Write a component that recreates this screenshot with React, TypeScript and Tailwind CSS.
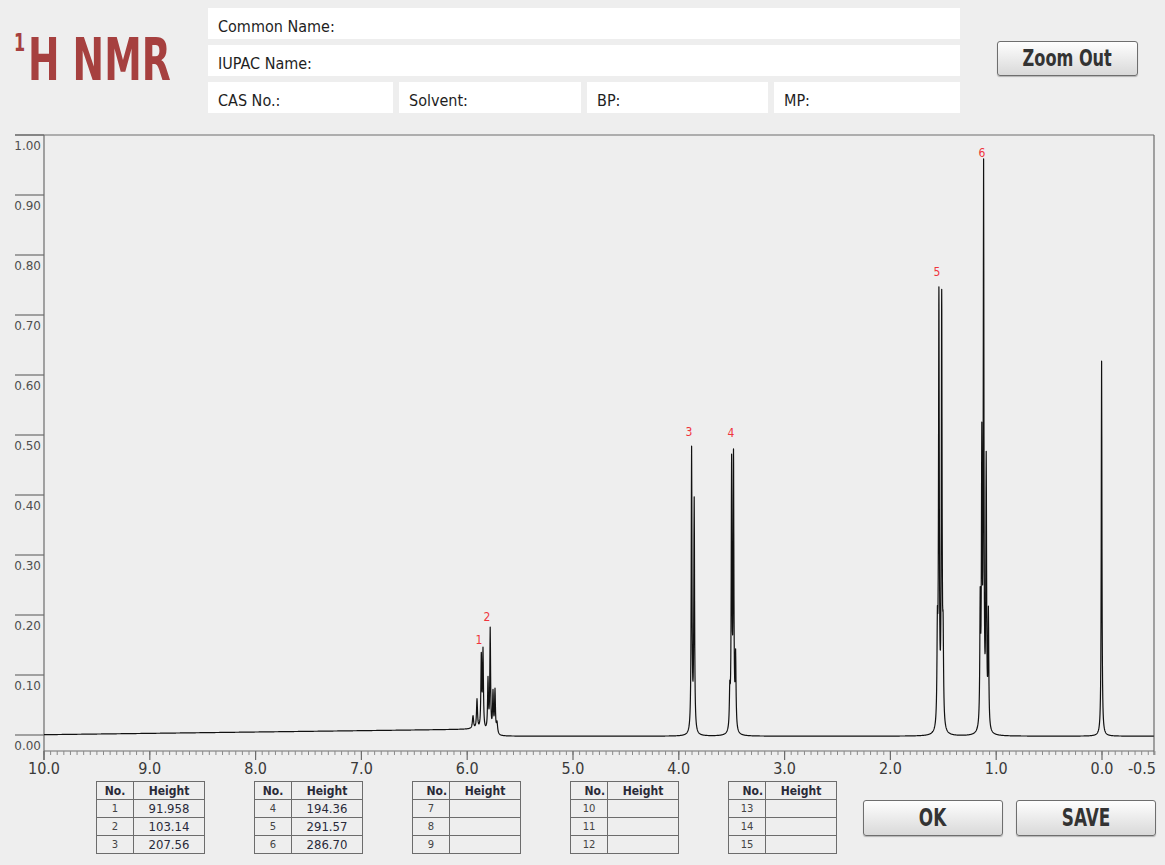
import React from 'react';

// plot geometry, in page pixels
const X0 = 44;
const X1 = 1154;
const PX_PER_PPM = 105.8;
const Y_TOP = 135;
const Y0 = 735; // 0.00 on the intensity axis
const UNIT = 600; // pixels for 1.00
const Y_AXIS = 751;

const xOf = (ppm: number) => X0 + (10 - ppm) * PX_PER_PPM;

// spectrum lines: [x, height, half width]
const LINES: [number, number, number][] = [
  [473, 0.022, 0.7],
  [477, 0.05, 0.6],
  [481.3, 0.12, 0.5],
  [483, 0.13, 0.5],
  [488, 0.085, 0.5],
  [490.2, 0.17, 0.45],
  [493, 0.065, 0.5],
  [495, 0.07, 0.5],
  [497, 0.018, 0.7],
  [691.6, 0.472, 0.45],
  [694.2, 0.385, 0.45],
  [729.8, 0.06, 0.5],
  [731.6, 0.44, 0.45],
  [733.5, 0.448, 0.45],
  [735.6, 0.12, 0.5],
  [937.4, 0.15, 0.5],
  [938.9, 0.714, 0.45],
  [941.7, 0.71, 0.45],
  [943.1, 0.13, 0.5],
  [980.2, 0.2, 0.45],
  [981.8, 0.46, 0.45],
  [983.6, 0.917, 0.4],
  [986.2, 0.44, 0.45],
  [988.4, 0.19, 0.45],
  [1101.6, 0.625, 0.4],
];

const PEAK_LABELS: [string, number, number][] = [
  ['1', 479, 644],
  ['2', 487, 621],
  ['3', 689, 436],
  ['4', 731, 437],
  ['5', 937, 276],
  ['6', 982, 157],
];

function baseline(x: number) {
  if (x < 470) return 0.0005 + (0.009 * (x - 44)) / 426;
  if (x < 500) return 0.0095 - (0.0115 * (x - 470)) / 30;
  return -0.002;
}

function spectrumPoints() {
  const xs: number[] = [];
  for (let x = X0; x <= X1; x += 0.2) xs.push(x);
  LINES.forEach((l) => xs.push(l[0]));
  xs.sort((a, b) => a - b);
  return xs
    .map((x) => {
      let v = baseline(x);
      for (const [c, h, g] of LINES) v += (h * g * g) / (g * g + (x - c) * (x - c));
      return `${x.toFixed(2)},${(Y0 - v * UNIT).toFixed(2)}`;
    })
    .join(' ');
}

const NARROW = "font-['DejaVu_Sans_Condensed','Liberation_Sans_Narrow','Liberation_Sans',sans-serif]";

function Spectrum() {
  const points = spectrumPoints();
  const yTicks = Array.from({ length: 11 }, (_, i) => i);
  const majors = [10, 9, 8, 7, 6, 5, 4, 3, 2, 1, 0];
  const minors = Array.from({ length: 169 }, (_, i) => xOf(10 - i / 16));

  return (
    <svg width={1165} height={658} viewBox="0 120 1165 658" className="block">
      {/* frame */}
      <g stroke="#6c6c6c" strokeWidth={1.2} fill="none">
        <line x1={15} y1={Y_TOP} x2={X1} y2={Y_TOP} />
        <line x1={X0} y1={Y_TOP} x2={X0} y2={760} />
        <line x1={X1} y1={Y_TOP} x2={X1} y2={755} />
        <line x1={X0} y1={Y_AXIS} x2={X1} y2={Y_AXIS} />
        {yTicks.map((i) => (
          <line key={i} x1={15} y1={Y_TOP + i * 60} x2={X0} y2={Y_TOP + i * 60} />
        ))}
        {minors.map((x, i) => (
          <line key={i} x1={x} y1={Y_AXIS} x2={x} y2={755} strokeWidth={1} stroke="#8a8a8a" />
        ))}
        {majors.map((p) => (
          <line key={p} x1={xOf(p)} y1={Y_AXIS} x2={xOf(p)} y2={760} />
        ))}
      </g>

      {/* y labels */}
      {yTicks.map((i) => (
        <text
          key={i}
          x={41}
          y={Y_TOP + i * 60 + 15}
          textAnchor="end"
          className="font-['DejaVu_Sans',sans-serif] text-[12px] fill-[#4e4e4e]"
        >
          {(1 - i / 10).toFixed(2)}
        </text>
      ))}

      {/* x labels */}
      {majors.map((p) => (
        <text
          key={p}
          x={xOf(p)}
          y={774}
          textAnchor="middle"
          className={`${NARROW} text-[16px] fill-[#3a3a3a]`}
        >
          {p.toFixed(1)}
        </text>
      ))}
      <text x={1156} y={774} textAnchor="end" className={`${NARROW} text-[16px] fill-[#3a3a3a]`}>
        -0.5
      </text>

      <polyline points={points} fill="none" stroke="#111" strokeWidth={1.2} strokeLinejoin="round" />

      {PEAK_LABELS.map(([t, x, y]) => (
        <text key={t} x={x} y={y} textAnchor="middle" className={`${NARROW} text-[12px] fill-[#f0343c]`}>
          {t}
        </text>
      ))}
    </svg>
  );
}

function Field({ label, className = '' }: { label: string; className?: string }) {
  return (
    <div className={`bg-white h-[31px] flex items-center pl-[10px] pt-[6px] ${className}`}>
      <span className={`${NARROW} text-[16px] text-[#1e1e1e]`}>{label}</span>
    </div>
  );
}

function PeakTable({ start, values, headAlign }: { start: number; values: string[]; headAlign: string }) {
  const rows = [0, 1, 2];
  return (
    <table className="border-collapse w-[108px] table-fixed">
      <colgroup>
        <col className="w-[37px]" />
        <col className="w-[71px]" />
      </colgroup>
      <thead>
        <tr className="h-[18px]">
          <th className={`border border-[#6c6c6c] ${headAlign} px-[2px] ${NARROW} text-[12px] font-bold text-[#2a2a38] leading-none`}>
            No.
          </th>
          <th className={`border border-[#6c6c6c] text-center ${NARROW} text-[12px] font-bold text-[#2a2a38] leading-none`}>
            Height
          </th>
        </tr>
      </thead>
      <tbody>
        {rows.map((r) => (
          <tr key={r} className="h-[18px]">
            <td className="border border-[#6c6c6c] text-center font-['DejaVu_Sans',sans-serif] text-[10px] text-[#444] leading-none">
              {start + r}
            </td>
            <td className={`border border-[#6c6c6c] text-center ${NARROW} text-[13px] text-[#2a2a3a] leading-none`}>
              {values[r] ?? ''}
            </td>
          </tr>
        ))}
      </tbody>
    </table>
  );
}

function GrayButton({ label, className = '' }: { label: string; className?: string }) {
  return (
    <button
      className={`border border-[#6e6e6e] rounded-[3px] bg-gradient-to-b from-[#fefefe] to-[#d9d9d9] shadow-[0_1px_1px_rgba(0,0,0,0.25)] flex items-center justify-center ${NARROW} font-bold text-[#333] ${className}`}
    >
      <span className="scale-x-[0.78]">{label}</span>
    </button>
  );
}

export default function App() {
  return (
    <div className="w-[1165px] h-[865px] bg-[#eeeeee] overflow-hidden">
      {/* header */}
      <div className="flex h-[120px]">
        <div className="w-[208px] pl-[14px] pt-[30px]">
          <div className={`flex items-start text-[#a6403f] font-bold ${NARROW} leading-none scale-x-[0.71] origin-left whitespace-nowrap`}>
            <span className="text-[25px] mt-[0px]">1</span>
            <span className="text-[59px] ml-[4px]">H NMR</span>
          </div>
        </div>
        <div className="w-[752px] pt-[8px] flex flex-col gap-[6px]">
          <Field label="Common Name:" />
          <Field label="IUPAC Name:" />
          <div className="flex gap-[6px]">
            <Field label="CAS No.:" className="w-[185px]" />
            <Field label="Solvent:" className="w-[182px]" />
            <Field label="BP:" className="w-[181px]" />
            <Field label="MP:" className="flex-1" />
          </div>
        </div>
        <div className="pl-[37px] pt-[41px]">
          <GrayButton label="Zoom Out" className="w-[141px] h-[35px] text-[23px]" />
        </div>
      </div>

      <Spectrum />

      {/* bottom */}
      <div className="flex items-start pt-[3px] pl-[96px]">
        <div className="flex gap-[49px]">
          <PeakTable start={1} values={['91.958', '103.14', '207.56']} headAlign="text-center" />
          <PeakTable start={4} values={['194.36', '291.57', '286.70']} headAlign="text-center" />
          <PeakTable start={7} values={[]} headAlign="text-right" />
          <PeakTable start={10} values={[]} headAlign="text-right" />
          <PeakTable start={13} values={[]} headAlign="text-right" />
        </div>
        <div className="flex gap-[13px] ml-[26px] mt-[19px]">
          <GrayButton label="OK" className="w-[140px] h-[36px] text-[24px]" />
          <GrayButton label="SAVE" className="w-[140px] h-[36px] text-[24px]" />
        </div>
      </div>
    </div>
  );
}
